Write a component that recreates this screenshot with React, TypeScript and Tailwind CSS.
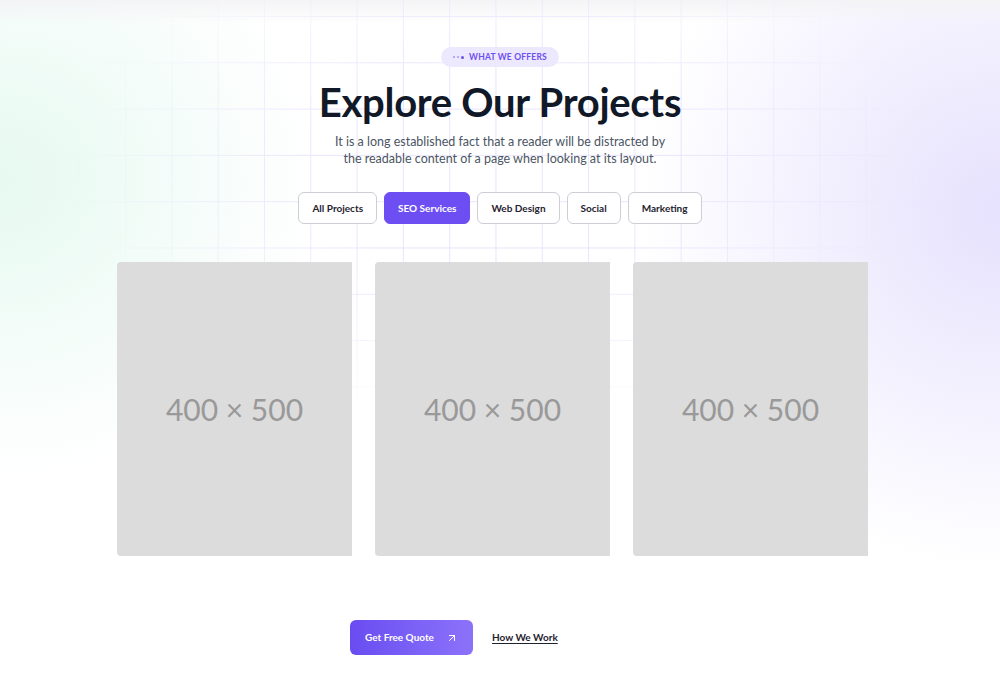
import React, { useState } from 'react';
import { ArrowUpRight } from 'lucide-react';

const filters = ['All Projects', 'SEO Services', 'Web Design', 'Social', 'Marketing'];

const projects = [
  { id: 1, label: '400 × 500' },
  { id: 2, label: '400 × 500' },
  { id: 3, label: '400 × 500' },
];

const ProjectCard = ({ label }: { label: string }) => (
  <div className="w-[235px] h-[294px] shrink-0 rounded-l-[4px] bg-[#dcdcdc] flex items-center justify-center">
    <span className="font-['Lato',sans-serif] text-[30px] text-[#999999]">{label}</span>
  </div>
);

const App = () => {
  const [active, setActive] = useState<string>('SEO Services');

  return (
    <div className="relative w-full h-[681px] overflow-hidden bg-white font-['Lato',sans-serif]">
      {/* background glows */}
      <div className="pointer-events-none absolute inset-0 bg-[radial-gradient(ellipse_320px_300px_at_0px_180px,#e6f9f1,transparent)]" />
      <div className="pointer-events-none absolute inset-0 bg-[radial-gradient(ellipse_360px_360px_at_1000px_210px,#e6e1fd,transparent)]" />
      <div className="pointer-events-none absolute inset-x-0 top-0 h-[24px] bg-gradient-to-b from-[#f4f4f6] to-transparent" />

      {/* grid */}
      <div className="pointer-events-none absolute inset-x-0 top-0 h-[420px] bg-[linear-gradient(to_right,#e3ddfd_1px,transparent_1px),linear-gradient(to_bottom,#e3ddfd_1px,transparent_1px)] bg-[size:46.3px_46.3px] bg-[position:32.5px_16px] [mask-image:radial-gradient(ellipse_440px_260px_at_500px_170px,black_40%,transparent)] opacity-80" />

      <section className="relative flex flex-col items-center pt-[47px]">
        <div className="flex items-center gap-[5px] h-[20px] px-[12px] rounded-full bg-[#ece8fd]">
          <span className="flex items-center gap-[2px]">
            <span className="w-[2px] h-[2px] rounded-full bg-[#a996f7]" />
            <span className="w-[2px] h-[2px] rounded-full bg-[#a996f7]" />
            <span className="w-[3px] h-[3px] rounded-full bg-[#6d4ef2]" />
          </span>
          <span className="text-[8.5px] font-bold tracking-[0.2px] text-[#6d4ef2]">WHAT WE OFFERS</span>
        </div>

        <h1 className="mt-[11px] text-[40px] leading-[48px] font-bold tracking-[-0.3px] text-[#111827]">
          Explore Our Projects
        </h1>

        <p className="mt-[7px] text-center text-[12.5px] leading-[17px] text-[#4b5563]">
          It is a long established fact that a reader will be distracted by
          <br />
          the readable content of a page when looking at its layout.
        </p>

        <div className="mt-[25px] flex gap-[7px]">
          {filters.map((f) => (
            <button
              key={f}
              onClick={() => setActive(f)}
              className={
                active == f
                  ? 'h-[32px] px-[13px] rounded-[6px] border border-[#6d4ef2] bg-[#6d4ef2] text-[10px] font-bold text-white'
                  : 'h-[32px] px-[13px] rounded-[6px] border border-[#cdced6] bg-white text-[10px] font-bold text-[#1f2230]'
              }
            >
              {f}
            </button>
          ))}
        </div>

        <div className="mt-[38px] w-[766px] flex gap-[23px]">
          {projects.map((p) => (
            <ProjectCard key={p.id} label={p.label} />
          ))}
        </div>

        <div className="mt-[64px] w-[300px] flex items-center gap-[19px]">
          <button className="h-[35px] w-[123px] flex items-center justify-center gap-[12px] rounded-[6px] bg-gradient-to-r from-[#6a4cf1] to-[#8c72fa] text-[10px] font-bold text-white">
            Get Free Quote
            <ArrowUpRight size={12} strokeWidth={2} />
          </button>
          <a href="#" className="text-[10px] font-bold text-[#1f2230] underline underline-offset-2">
            How We Work
          </a>
        </div>
      </section>
    </div>
  );
};

export default App;
